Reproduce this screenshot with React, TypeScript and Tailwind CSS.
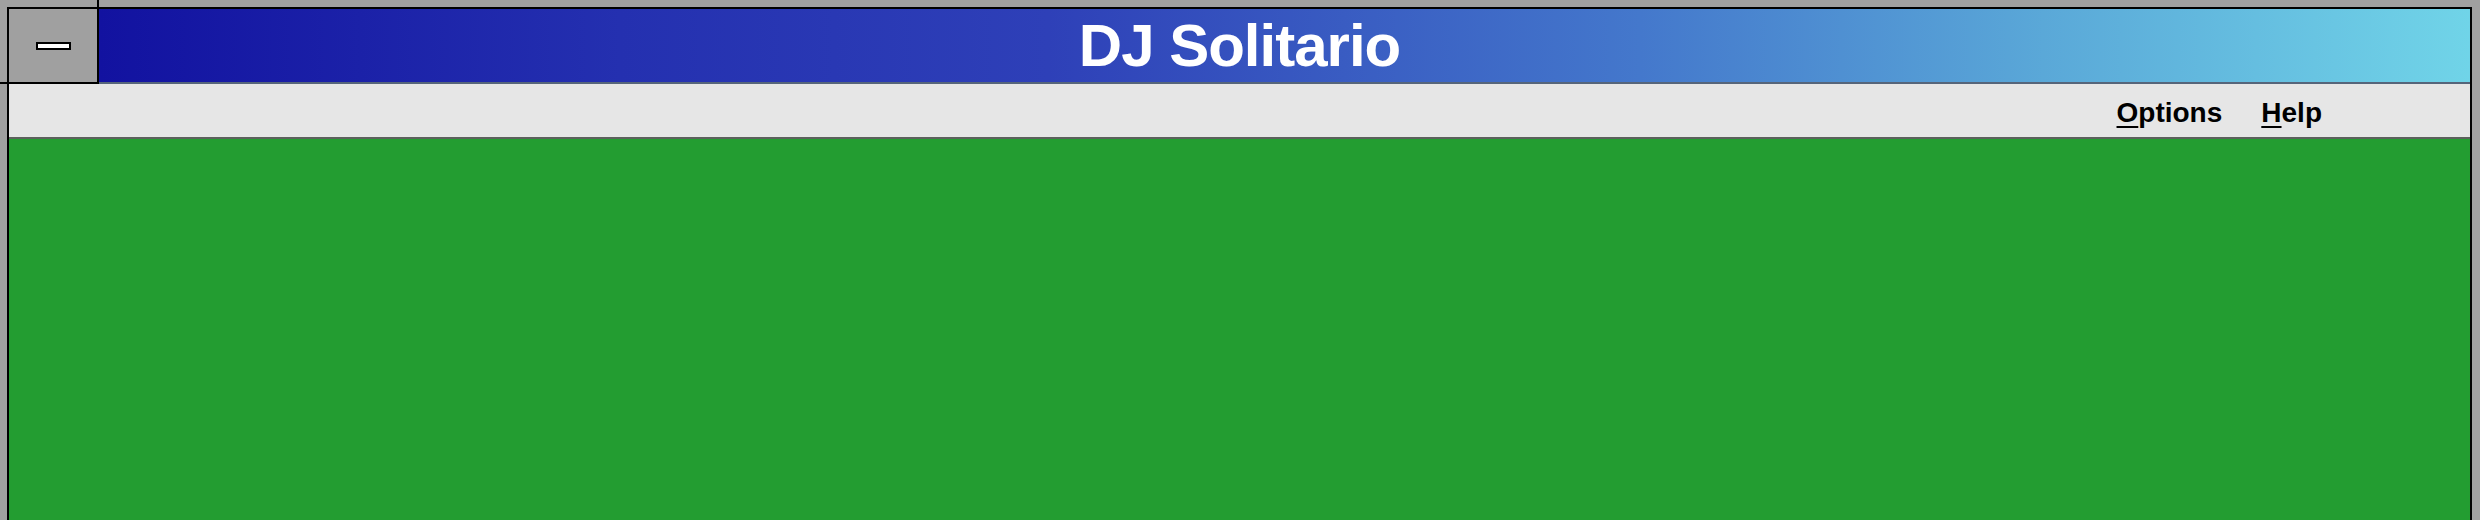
export default function App() {
  return (
    <div className="relative h-[520px] w-[2480px] overflow-hidden bg-[#a0a0a0] pl-[7px] pr-[8px] pt-[7px]">
      {/* stray frame lines in the desktop area */}
      <div className="absolute left-[97px] top-0 h-[7px] w-[2px] bg-black" />
      <div className="absolute left-0 top-[82px] h-[2px] w-[7px] bg-black" />

      <div className="flex h-[520px] flex-col border-2 border-b-0 border-black">
        {/* title bar */}
        <div className="flex h-[75px] shrink-0">
          <div className="flex w-[90px] shrink-0 items-center justify-center border-b-2 border-r-2 border-black bg-[#a0a0a0]">
            <div className="h-[8px] w-[35px] border-2 border-black bg-white" />
          </div>
          <div className="flex flex-1 items-center justify-center border-b-2 border-[#56657a] bg-[linear-gradient(to_right,#1212a0_0%,#2430b0_22%,#2e40b8_40%,#4478cc_65%,#5aa8d8_82%,#70d4e8_100%)] pr-[90px]">
            <span className="font-['Liberation_Sans',Arial,sans-serif] text-[60px] font-bold leading-none tracking-[-1px] text-white">
              DJ Solitario
            </span>
          </div>
        </div>

        {/* menu bar */}
        <div className="flex h-[55px] shrink-0 items-center justify-end gap-[39px] border-b-2 border-[#5c615c] bg-[#e6e6e6] pr-[148px] pt-[5px] font-['Liberation_Sans',Arial,sans-serif] text-[28px] font-bold leading-none text-black">
          <span>
            <span className="underline decoration-2 underline-offset-[4px]">O</span>ptions
          </span>
          <span>
            <span className="underline decoration-2 underline-offset-[4px]">H</span>elp
          </span>
        </div>

        {/* table */}
        <div className="flex-1 bg-[#239d31]" />
      </div>
    </div>
  );
}
